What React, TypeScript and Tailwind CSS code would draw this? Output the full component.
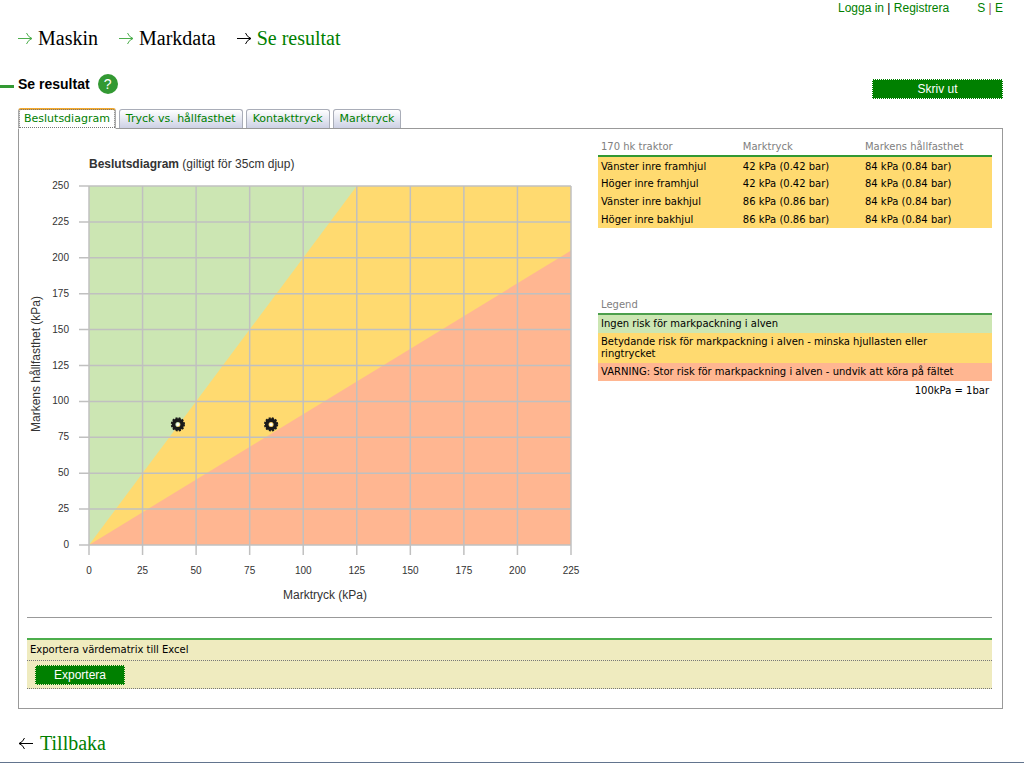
import { useState } from 'react';

interface WheelRow {
  name: string;
  groundPressure: string;
  soilStrength: string;
}

interface Step {
  label: string;
  active: boolean;
}

const steps: Step[] = [
  { label: 'Maskin', active: false },
  { label: 'Markdata', active: false },
  { label: 'Se resultat', active: true },
];

const tabs = ['Beslutsdiagram', 'Tryck vs. hållfasthet', 'Kontakttryck', 'Marktryck'];

const wheels: WheelRow[] = [
  { name: 'Vänster inre framhjul', groundPressure: '42 kPa (0.42 bar)', soilStrength: '84 kPa (0.84 bar)' },
  { name: 'Höger inre framhjul', groundPressure: '42 kPa (0.42 bar)', soilStrength: '84 kPa (0.84 bar)' },
  { name: 'Vänster inre bakhjul', groundPressure: '86 kPa (0.86 bar)', soilStrength: '84 kPa (0.84 bar)' },
  { name: 'Höger inre bakhjul', groundPressure: '86 kPa (0.86 bar)', soilStrength: '84 kPa (0.84 bar)' },
];

const legend = [
  { text: 'Ingen risk för markpackning i alven', bg: 'bg-[#cce6b3]' },
  {
    text: 'Betydande risk för markpackning i alven - minska hjullasten eller ringtrycket',
    bg: 'bg-[#ffda70]',
  },
  { text: 'VARNING: Stor risk för markpackning i alven - undvik att köra på fältet', bg: 'bg-[#ffb691]' },
];

// Plot area in svg units
const plot = { left: 62, right: 544, top: 36, bottom: 395 };
const maxX = 225;
const maxY = 250;
const xTicks = [0, 25, 50, 75, 100, 125, 150, 175, 200, 225];
const yTicks = [0, 25, 50, 75, 100, 125, 150, 175, 200, 225, 250];
const points = [
  { x: 41.5, y: 84 },
  { x: 85, y: 84 },
];

const px = (v: number) => plot.left + (v / maxX) * (plot.right - plot.left);
const py = (v: number) => plot.bottom - (v / maxY) * (plot.bottom - plot.top);

function Arrow({ className }: { className: string }) {
  return (
    <svg viewBox="0 0 15 13" className={`h-[13px] w-[15px] shrink-0 ${className}`} fill="none" stroke="currentColor">
      <path d="M0 6.5H14M8.5 1Q10 5 14 6.5Q10 8 8.5 12" />
    </svg>
  );
}

function DecisionChart() {
  return (
    <svg
      viewBox="0 0 560 460"
      className="h-auto w-full font-['Liberation_Sans',Arial,sans-serif]"
      role="img"
      aria-label="Beslutsdiagram"
      fill="#333"
    >
      <text x={plot.left} y="18" fontSize="12">
        <tspan fontWeight="bold">Beslutsdiagram</tspan> (giltigt för 35cm djup)
      </text>

      {/* Risk zones */}
      <rect
        x={plot.left}
        y={plot.top}
        width={plot.right - plot.left}
        height={plot.bottom - plot.top}
        fill="#ffda70"
      />
      <polygon points={`${px(0)},${py(0)} ${px(0)},${py(250)} ${px(125)},${py(250)}`} fill="#cce6b3" />
      <polygon points={`${px(0)},${py(0)} ${px(225)},${py(205)} ${px(225)},${py(0)}`} fill="#ffb691" />

      {/* Grid */}
      <g stroke="#c0c0c0" strokeWidth="1.5">
        {xTicks.map((v) => (
          <line key={v} x1={px(v)} x2={px(v)} y1={plot.top} y2={plot.bottom + 10} />
        ))}
        {yTicks.map((v) => (
          <line key={v} x1={plot.left - 10} x2={plot.right} y1={py(v)} y2={py(v)} />
        ))}
      </g>

      <g fontSize="10">
        {xTicks.map((v) => (
          <text key={v} x={px(v)} y="424" textAnchor="middle">
            {v}
          </text>
        ))}
        {yTicks.map((v) => (
          <text key={v} x="42" y={py(v) + 3} textAnchor="end">
            {v}
          </text>
        ))}
      </g>

      <text x="298" y="449" fontSize="12" textAnchor="middle">
        Marktryck (kPa)
      </text>
      <text transform="translate(13 214) rotate(-90)" fontSize="12" textAnchor="middle">
        Markens hållfasthet (kPa)
      </text>

      {/* Wheels */}
      {points.map((p) => (
        <g key={p.x} fill="none" stroke="#1a1a1a">
          <circle cx={px(p.x)} cy={py(p.y)} r="4.3" strokeWidth="3.6" />
          <circle cx={px(p.x)} cy={py(p.y)} r="6.2" strokeWidth="1.8" strokeDasharray="2 1.25" />
          <circle cx={px(p.x)} cy={py(p.y)} r="1.5" fill="#fff" stroke="none" />
        </g>
      ))}
    </svg>
  );
}

export default function App() {
  const [activeTab, setActiveTab] = useState(tabs[0]);

  return (
    <div className="flex min-h-screen flex-col border-b border-slate-500 bg-white pr-[21px] font-['DejaVu_Sans',Verdana,sans-serif] text-[10px] text-black">
      {/* Account links */}
      <div className="flex h-4 items-center justify-end gap-7 font-['Liberation_Sans',Arial,sans-serif] text-xs">
        <div>
          <a href="#login" className="text-[#008000]">Logga in</a> |{' '}
          <a href="#register" className="text-[#008000]">Registrera</a>
        </div>
        <div className="text-[#a05050]">
          <a href="#sv" className="text-[#008000]">S</a> | <a href="#en" className="text-[#008000]">E</a>
        </div>
      </div>

      {/* Steps */}
      <nav className="mt-2 flex h-7 items-center gap-[21px] pl-[18px] font-['Liberation_Serif','Times_New_Roman',serif] text-xl">
        {steps.map((step) => (
          <a
            key={step.label}
            href="#step"
            className={`flex items-center gap-[5px] ${step.active ? 'text-[#008000]' : 'text-black'}`}
          >
            <Arrow className={step.active ? 'text-black' : 'text-[#4cae4c]'} />
            {step.label}
          </a>
        ))}
      </nav>

      {/* Title row */}
      <div className="mt-5 flex items-start font-['Liberation_Sans',Arial,sans-serif]">
        <div className="flex h-6 items-center">
          <span className="mt-1 mr-1 h-[3px] w-3.5 bg-[#339933]" />
          <h1 className="text-sm font-bold">Se resultat</h1>
          <button
            type="button"
            aria-label="Hjälp"
            className="ml-2 flex size-5 items-center justify-center rounded-full bg-[#339933] text-sm text-white"
          >
            ?
          </button>
        </div>
        <button
          type="button"
          className="mt-[7px] ml-auto h-5 w-[131px] border border-dotted border-white bg-[#008000] text-xs text-white"
        >
          Skriv ut
        </button>
      </div>

      <main className="mt-[9px] pl-[18px]">
        <div role="tablist" className="relative flex items-end gap-[3px]">
          {tabs.map((tab) => (
            <button
              key={tab}
              type="button"
              role="tab"
              aria-selected={tab === activeTab}
              onClick={() => setActiveTab(tab)}
              className={
                tab === activeTab
                  ? '-mb-px h-[21px] rounded-t-[3px] border border-t-2 border-[#aaa] border-t-[#f0a830] border-b-white bg-white px-[5px] text-[11px] text-[#008000] outline-1 -outline-offset-2 outline-dotted outline-[#777]'
                  : 'h-[19px] rounded-t-[3px] border border-b-0 border-[#a9adb8] bg-linear-to-b from-white to-[#cdd1e4] px-1.5 text-[11px] text-[#008000]'
              }
            >
              {tab}
            </button>
          ))}
        </div>

        <div className="border border-[#999] pt-[21px] pr-[10px] pb-[19px] pl-2">
          <div className="flex items-start gap-[11px]">
            <div className="w-[560px] shrink">
              <DecisionChart />
            </div>

            <div className="-mt-3 min-w-0 flex-1">
              <table className="w-full table-fixed text-left">
                <thead>
                  <tr className="h-[18px] border-b-2 border-[#339933] text-[#808080]">
                    <th className="w-[36%] px-[3px] font-normal">170 hk traktor</th>
                    <th className="w-[31%] px-[3px] font-normal">Marktryck</th>
                    <th className="px-[3px] font-normal">Markens hållfasthet</th>
                  </tr>
                </thead>
                <tbody className="bg-[#ffda70]">
                  {wheels.map((wheel) => (
                    <tr key={wheel.name} className="h-[18px]">
                      <td className="px-[3px] pt-px">{wheel.name}</td>
                      <td className="px-[3px] pt-px">{wheel.groundPressure}</td>
                      <td className="px-[3px] pt-px">{wheel.soilStrength}</td>
                    </tr>
                  ))}
                </tbody>
              </table>

              <table className="mt-[68px] w-full text-left leading-3">
                <thead>
                  <tr className="h-[18px] border-b-2 border-[#4c9f4c] text-[#808080]">
                    <th className="px-[3px] font-normal">Legend</th>
                  </tr>
                </thead>
                <tbody>
                  {legend.map((item) => (
                    <tr key={item.text} className={item.bg}>
                      <td className="py-[3px] pr-6 pl-[3px]">{item.text}</td>
                    </tr>
                  ))}
                </tbody>
              </table>
              <p className="px-[3px] py-1 text-right leading-3">100kPa = 1bar</p>
            </div>
          </div>

          <hr className="mt-[7px] border-[#999]" />

          {/* Export */}
          <section className="mt-5 border-t-2 border-[#4cae4c] bg-[#efebbf]">
            <h2 className="border-b border-dotted border-[#777] px-[3px] py-1 leading-3">
              Exportera värdematrix till Excel
            </h2>
            <div className="flex border-b border-dotted border-[#777] px-2 pt-1 pb-[3px]">
              <button
                type="button"
                className="h-5 w-[90px] border border-dotted border-[#efebbf] bg-[#008000] font-['Liberation_Sans',Arial,sans-serif] text-xs text-white"
              >
                Exportera
              </button>
            </div>
          </section>
        </div>

        <a
          href="#back"
          className="mt-5 inline-flex items-center gap-[7px] font-['Liberation_Serif','Times_New_Roman',serif] text-xl text-[#008000]"
        >
          <Arrow className="rotate-180 text-black" />
          Tillbaka
        </a>
      </main>
    </div>
  );
}
